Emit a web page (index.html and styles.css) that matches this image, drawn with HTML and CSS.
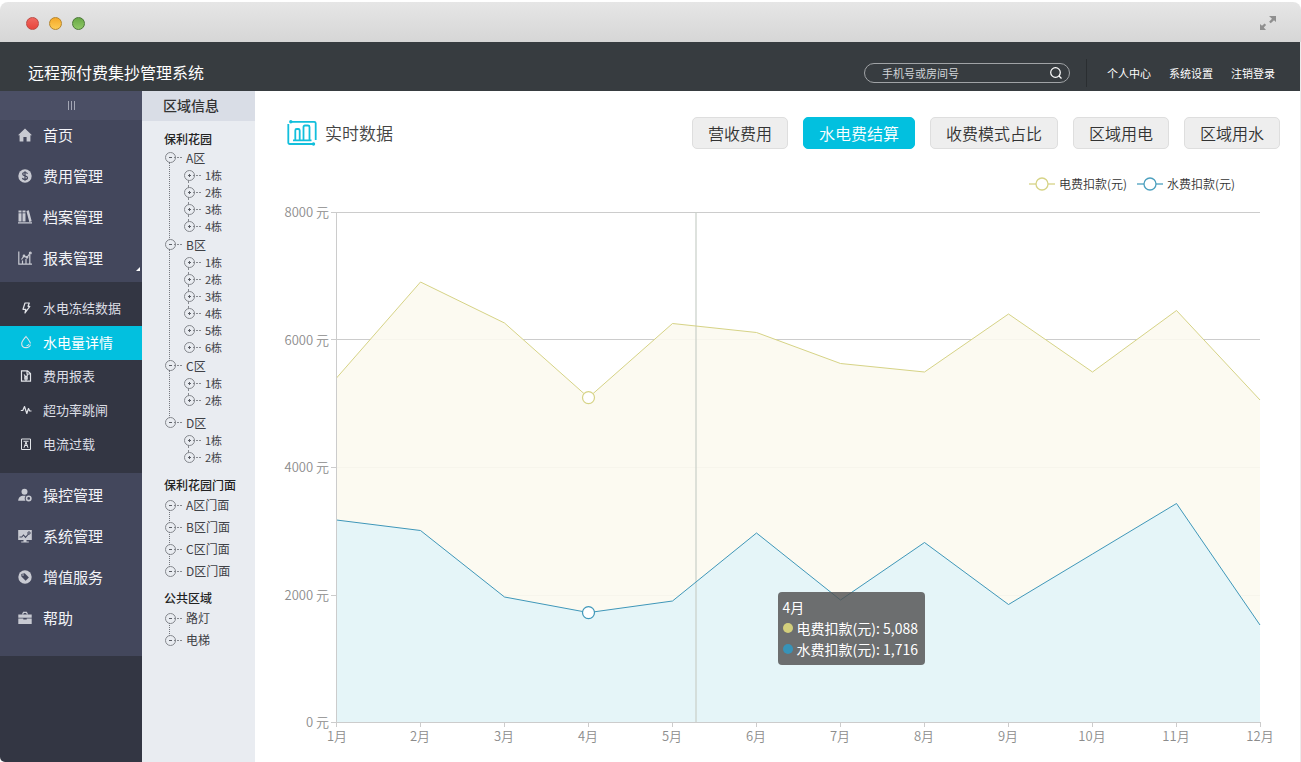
FILE: index.html
```html
<!DOCTYPE html>
<html lang="zh-CN">
<head>
<meta charset="utf-8">
<title>远程预付费集抄管理系统</title>
<meta name="viewport" content="width=device-width, initial-scale=1">
<link rel="stylesheet" href="styles.css">
</head>
<body>
<div class="window">
  <div class="titlebar">
    <div class="lights"><span class="light light-red"></span><span class="light light-yellow"></span><span class="light light-green"></span></div>
    <svg class="expand" viewBox="0 0 18 16" width="18" height="16" fill="#8f8f8f"><path d="M10 1h7v6l-2-1.800-3.300 3-1.600-1.500L13 3.800z"/><path d="M1 15V9l2 1.800 2.600-2.400 1.500 1.500L4.800 12.500 7 15z"/></svg>
  </div>

  <header class="header">
    <h1 class="brand">远程预付费集抄管理系统</h1>
    <form class="search">
      <input class="search-input" type="search" aria-label="搜索" placeholder="手机号或房间号">
      <button class="search-btn" type="button" aria-label="搜索"><svg viewBox="0 0 14 14" width="14" height="14" fill="none" stroke="#fff" stroke-width="1.200"><circle cx="6.500" cy="6.500" r="4.800"/><path d="M10 10l2.500 2.500"/></svg></button>
    </form>
    <nav class="topnav"><a href="#">个人中心</a><a href="#">系统设置</a><a href="#">注销登录</a></nav>
  </header>

  <div class="body">
    <aside class="sidebar">
      <button class="collapse" type="button" aria-label="收起菜单"><span></span><span></span><span></span></button>
      <nav class="menu menu-top">
        <a href="#"><svg class="icon" viewBox="0 0 14 14"><path fill="currentColor" d="M7 .5L14 7.200h-1.600V13.500H8.600V9H5.400v4.500H1.600V7.200H0z"/></svg>首页</a>
        <a href="#"><svg class="icon" viewBox="0 0 14 14"><circle cx="7" cy="7" r="6.700" fill="currentColor"/><path d="M9.500 4.800C9.100 3.800 8.200 3.500 7 3.500c-1.400 0-2.300.6-2.300 1.600C4.700 7.400 9.500 6.300 9.500 8.800c0 1.100-1 1.700-2.500 1.700-1.300 0-2.300-.4-2.600-1.500M7 2.200v9.600" fill="none" stroke="#43475c" stroke-width="1.200"/></svg>费用管理</a>
        <a href="#"><svg class="icon" viewBox="0 0 14 14" fill="currentColor"><path d="M.5.500h3v2h-3zM4.500.500h3v2h-3zM.5 3.300h3v8.200h-3zM4.500 3.300h3v8.200h-3zM8.400.900l2.400-.6 2.900 11-2.400.6zM0 12.300h14v1.200H0z"/></svg>档案管理</a>
        <a href="#" class="has-sub"><svg class="icon" viewBox="0 0 14 14" fill="none" stroke="currentColor" stroke-width="1.200"><path d="M.8.500v12.700H14M4.500 13V9.500M8 13V8M11.800 13V4M3.500 8.500L6 5l2.800 1.500L12.300 2"/><circle cx="6" cy="5" r=".8"/><circle cx="9" cy="6.300" r=".8"/><circle cx="12.300" cy="2" r=".9"/></svg>报表管理</a>
      </nav>
      <nav class="submenu">
        <a href="#"><svg class="icon" viewBox="0 0 14 14" fill="none" stroke="currentColor" stroke-width="1.200" stroke-linejoin="round"><path d="M6 2h4.300L9 5.300h1.800L6 12 6.800 8.300H4z"/></svg>水电冻结数据</a>
        <a href="#" class="active"><svg class="icon" viewBox="0 0 14 14" fill="none" stroke="currentColor" stroke-width="1.100"><path d="M11.400 8.500C11.100 6.300 9 4 7 1.500 5 4 2.700 6.300 2.700 8.700c0 2.300 1.900 3.900 4.300 3.900 2.100 0 3.900-1.300 4.400-3M7.500 10.800c1.200-.1 2-.8 2.400-1.700"/></svg>水电量详情</a>
        <a href="#"><svg class="icon" viewBox="0 0 14 14" fill="none" stroke="currentColor" stroke-width="1.200"><path d="M2.500 1.800h6L11.500 4.500v7.700h-9zM8 2v3h3M5 5.500l2 2.500 2-2.500M7 8v3.500M5 8.200h4M5 9.800h4"/></svg>费用报表</a>
        <a href="#"><svg class="icon" viewBox="0 0 14 14" fill="none" stroke="currentColor" stroke-width="1.200" stroke-linejoin="round"><path d="M1.800 7.500h2L5.500 3.500l2.300 7 1.700-5 1.200 2.500h1.800"/></svg>超功率跳闸</a>
        <a href="#"><svg class="icon" viewBox="0 0 14 14" fill="none" stroke="currentColor" stroke-width="1"><path d="M2.500 2h9v10.500h-9zM4.500 4.300h5M5 10.800L7 5l2 5.800M5.800 8.500h2.400"/></svg>电流过载</a>
      </nav>
      <nav class="menu menu-bottom">
        <a href="#"><svg class="icon" viewBox="0 0 14 14"><circle cx="6.500" cy="3.700" r="3" fill="currentColor"/><path fill="currentColor" d="M.2 12.800C.2 9.500 2.500 7.700 5.500 7.700h2.200c-1.300 1.400-1.300 3.500-.2 5.100z"/><circle cx="10.700" cy="10.400" r="2.200" fill="none" stroke="currentColor" stroke-width="1.600"/></svg>操控管理</a>
        <a href="#"><svg class="icon" viewBox="0 0 14 14"><path fill="currentColor" d="M.2 1h13.600v10H8.500v1.500h2.300v1H3.200v-1h2.300V11H.2z"/><path d="M1.500 8h2.300l1.700-2 2 2.300 3-3.300" fill="none" stroke="#43475c" stroke-width="1.100"/><circle cx="11" cy="4" r="1.200" fill="none" stroke="#43475c"/></svg>系统管理</a>
        <a href="#"><svg class="icon" viewBox="0 0 14 14"><circle cx="7" cy="7" r="6.700" fill="currentColor"/><path d="M3.300 4l3.400-.8 4.200 4.300-3.300 3.200-4.200-4.200z" fill="#43475c"/><circle cx="5" cy="5" r=".8" fill="#c8cad2"/></svg>增值服务</a>
        <a href="#"><svg class="icon" viewBox="0 0 14 14"><path fill="currentColor" d="M.3 3.500h13.400v3.300H.3zM.3 7.500h5v1h3.400v-1h5v5.500H.3z"/><path d="M4.500 3.500L5.500 1.400h3l1 2.100" fill="none" stroke="currentColor" stroke-width="1.200"/></svg>帮助</a>
      </nav>
    </aside>

    <aside class="regions">
      <h2 class="regions-title">区域信息</h2>
      <h3 class="group-title">保利花园</h3>
      <ul class="tree">
        <li class="node"><a href="#">A区</a>
          <ul class="leaves"><li><a href="#">1栋</a></li><li><a href="#">2栋</a></li><li><a href="#">3栋</a></li><li><a href="#">4栋</a></li></ul></li>
        <li class="node"><a href="#">B区</a>
          <ul class="leaves"><li><a href="#">1栋</a></li><li><a href="#">2栋</a></li><li><a href="#">3栋</a></li><li><a href="#">4栋</a></li><li><a href="#">5栋</a></li><li><a href="#">6栋</a></li></ul></li>
        <li class="node node-spaced"><a href="#">C区</a>
          <ul class="leaves"><li><a href="#">1栋</a></li><li><a href="#">2栋</a></li></ul></li>
        <li class="node"><a href="#">D区</a>
          <ul class="leaves"><li><a href="#">1栋</a></li><li><a href="#">2栋</a></li></ul></li>
      </ul>
      <h3 class="group-title">保利花园门面</h3>
      <ul class="tree tree-loose">
        <li class="node"><a href="#">A区门面</a></li><li class="node"><a href="#">B区门面</a></li><li class="node"><a href="#">C区门面</a></li><li class="node"><a href="#">D区门面</a></li>
      </ul>
      <h3 class="group-title group-near">公共区域</h3>
      <ul class="tree tree-loose">
        <li class="node"><a href="#">路灯</a></li><li class="node"><a href="#">电梯</a></li>
      </ul>
    </aside>

    <main class="main">
      <div class="toolbar">
        <svg viewBox="0 0 30 26" width="30" height="26" fill="none" stroke="#12bfdc" stroke-width="1.800"><path d="M3.500 1.800h23.700q1.500 0 1.500 1.500V20M26.500 24H2.800q-1.500 0-1.500-1.500V4M6 20.300h18.500M8.300 20V10.500q0-1.500 1.500-1.500h1.400q1.500 0 1.500 1.500V20M16.500 20V7q0-1.500 1.500-1.500h3q1.500 0 1.500 1.500v13"/><circle cx="3.800" cy="1.800" r=".8"/><circle cx="26.500" cy="24" r=".8"/></svg>
        <h2 class="page-title">实时数据</h2>
        <div class="tabs">
          <button type="button">营收费用</button><button type="button" class="active">水电费结算</button><button type="button">收费模式占比</button><button type="button">区域用电</button><button type="button">区域用水</button>
        </div>
      </div>
      <div class="legend">
        <span class="legend-item"><svg viewBox="0 0 26 14" width="26" height="14" fill="#fff" stroke="#d6d386" stroke-width="1.300"><path d="M0 7h26"/><circle cx="13" cy="7" r="6"/></svg>电费扣款(元)</span>
        <span class="legend-item"><svg viewBox="0 0 26 14" width="26" height="14" fill="#fff" stroke="#4b9fbe" stroke-width="1.300"><path d="M0 7h26"/><circle cx="13" cy="7" r="6"/></svg>水费扣款(元)</span>
      </div>
      <div class="chart">
        <svg class="plot" viewBox="255 194 1045 568" role="img" aria-label="水电费结算">
          <path class="grid" d="M331 212.500H1260M331 339.500H1260M331 467.500H1260M331 595.500H1260"/>
          <path class="fill-power" d="M336.500 378L420.500 282 504.500 323 588.500 397.600 672.500 323.500 756.500 332.500 840.500 363.500 924.500 372 1008.500 314 1092.500 372 1176.500 310.500 1260 400V722H336.500z"/>
          <path class="fill-water" d="M336.500 520L420.500 530.500 504.500 597 588.500 612.600 672.500 601 756.500 533 840.500 600 924.500 542.500 1008.500 604.500 1092.500 554 1176.500 503.500 1260 625V722H336.500z"/>
          <path class="pointer" d="M696 212V722"/>
          <path class="line-power" d="M336.500 378L420.500 282 504.500 323 588.500 397.600 672.500 323.500 756.500 332.500 840.500 363.500 924.500 372 1008.500 314 1092.500 372 1176.500 310.500 1260 400"/>
          <path class="line-water" d="M336.500 520L420.500 530.500 504.500 597 588.500 612.600 672.500 601 756.500 533 840.500 600 924.500 542.500 1008.500 604.500 1092.500 554 1176.500 503.500 1260 625"/>
          <path class="axis" d="M336.500 212V722M331 722.500H1260.500M336.500 722v5M420.500 722v5M504.500 722v5M588.500 722v5M672.500 722v5M756.500 722v5M840.500 722v5M924.500 722v5M1008.500 722v5M1092.500 722v5M1176.500 722v5M1260.500 722v5"/>
          <circle class="line-power dot" cx="588.500" cy="397.600" r="6"/>
          <circle class="line-water dot" cx="588.500" cy="612.600" r="6"/>
          <g class="label label-y"><text x="329" y="217">8000 元</text><text x="329" y="345">6000 元</text><text x="329" y="472">4000 元</text><text x="329" y="600">2000 元</text><text x="329" y="727">0 元</text></g>
          <g class="label label-x"><text x="337" y="741">1月</text><text x="420" y="741">2月</text><text x="504" y="741">3月</text><text x="588" y="741">4月</text><text x="672" y="741">5月</text><text x="756" y="741">6月</text><text x="840" y="741">7月</text><text x="924" y="741">8月</text><text x="1008" y="741">9月</text><text x="1092" y="741">10月</text><text x="1176" y="741">11月</text><text x="1260" y="741">12月</text></g>
        </svg>
        <div class="tooltip">
          <div>4月</div>
          <div class="tip-row"><i class="tip-dot tip-power"></i>电费扣款(元): 5,088</div>
          <div class="tip-row"><i class="tip-dot tip-water"></i>水费扣款(元): 1,716</div>
        </div>
      </div>
    </main>
  </div>
</div>
</body>
</html>
```
FILE: styles.css
```css
* { box-sizing: border-box; }
body, h1, h2, h3, ul { margin: 0; padding: 0; }
ul { list-style: none; }
a { color: inherit; text-decoration: none; }
button, input { font: inherit; color: inherit; border: 0; padding: 0; background: none; }
svg { flex: none; }

body {
  background: #fff;
  color: #444;
  font-family: "Noto Sans CJK SC", sans-serif;
  font-size: 12px;
}

.window { display: flex; flex-direction: column; min-height: 100vh; padding-top: 2px; }

/* window chrome */
.titlebar {
  display: flex;
  align-items: center;
  justify-content: space-between;
  height: 40px;
  padding: 2px 24px 0 26px;
  border-radius: 8px 8px 0 0;
  background: linear-gradient(#e6e6e6, #d6d6d6);
}
.lights { display: flex; gap: 10px; }
.light { width: 13px; height: 13px; border: 1px solid; border-radius: 50%; }
.light-red { background: linear-gradient(#f0675f, #e8453c); border-color: #bd4a44; }
.light-yellow { background: linear-gradient(#f5a929, #fccb55); border-color: #b5852c; }
.light-green { background: linear-gradient(#68a846, #8fc866); border-color: #4b7838; }

/* application header */
.header {
  display: flex;
  align-items: center;
  height: 49px;
  padding: 13px 25px 0 28px;
  border-right: 1px solid #ececec;
  background: #373c40;
  color: #fff;
}
.brand { font-size: 16px; font-weight: 400; line-height: 22px; margin-right: auto; padding-bottom: 3px; }
.search {
  display: flex;
  align-items: center;
  width: 206px;
  height: 20px;
  padding: 0 6px 0 17px;
  border: 1px solid #a0a3a6;
  border-radius: 10px;
}
.search-input { flex: 1; min-width: 0; font-size: 11px; line-height: 16px; outline: 0; appearance: none; }
.search-input::placeholder { color: #d2d5d8; opacity: 1; }
.search-btn { display: flex; }
.topnav {
  display: flex;
  gap: 18px;
  margin-left: 16px;
  padding-left: 20px;
  border-left: 1px solid #2a2e31;
  font-size: 11px;
  line-height: 28px;
}

.body { display: flex; flex: 1; }

/* main navigation */
.sidebar { flex: none; width: 142px; background: #333643; color: #f3f4f8; border-bottom-left-radius: 5px; }
.collapse { display: flex; align-items: center; justify-content: center; gap: 2px; width: 100%; height: 29px; background: #4b4f65; }
.collapse span { width: 1px; height: 9px; background: #a4a7b5; }
.menu { display: flex; flex-direction: column; gap: 20px; background: #43475c; }
.menu-top { padding: 4px 0 14px; }
.menu-bottom { padding: 11px 0 28px; }
.menu a, .submenu a { display: flex; align-items: center; gap: 11px; padding-left: 18px; }
.menu a { font-size: 15px; line-height: 21px; }
.icon { width: 14px; height: 14px; color: #c8cad2; }
.has-sub { position: relative; }
.has-sub::after {
  content: "";
  position: absolute;
  right: 2px;
  bottom: -3px;
  border-left: 4px solid transparent;
  border-bottom: 4px solid #fff;
}
.submenu { padding: 10px 0 11px; }
.submenu a { font-size: 13px; line-height: 32px; padding-bottom: 2px; color: #dcdee5; padding-left: 19px; gap: 10px; }
.submenu .icon { color: #e2e4e9; }
.submenu a.active { background: #02c0df; color: #fff; font-size: 14px; }

/* region tree */
.regions { flex: none; width: 113px; background: #e9ecf1; color: #3f4146; }
.regions-title { padding: 0 0 2px 21px; background: #d9dde6; color: #333; font-size: 14px; font-weight: 500; line-height: 28px; }
.group-title { padding: 8px 0 0 22px; color: #222; font-size: 12px; font-weight: 500; line-height: 19px; }
.tree { padding-left: 23px; }
.tree + .group-title { padding-top: 9px; }
.tree + .group-near { padding-top: 6px; }
.node, .leaves li { position: relative; }
.node > a, .leaves a {
  display: flex;
  align-items: center;
  background: repeating-linear-gradient(90deg, #85888e 0 2px, transparent 2px 3px) 9px 50% / 9px 1px no-repeat;
}
.node > a { line-height: 19px; }
.leaves { padding-left: 19px; }
.leaves a { font-size: 11px; line-height: 17px; }
.node-spaced { padding-bottom: 4px; }
.tree-loose .node > a { line-height: 22px; }

.node > a::before, .leaves a::before {
  content: "";
  width: 9px;
  height: 9px;
  margin-right: 10px;
  border: 1px solid #85888e;
  border-radius: 50%;
  background: linear-gradient(#5c5f66, #5c5f66) center / 3px 1px no-repeat;
}
.leaves a::before {
  background:
    linear-gradient(#5c5f66, #5c5f66) center / 3px 1px no-repeat,
    linear-gradient(#5c5f66, #5c5f66) center / 1px 3px no-repeat;
}

.node:not(:last-child)::before {
  content: "";
  position: absolute;
  left: 4px;
  top: 14px;
  bottom: -5px;
  border-left: 1px dotted #74777e;
}
.leaves li:not(:last-child):not(:nth-child(n + 4))::before {
  content: "";
  position: absolute;
  left: 4px;
  top: 13px;
  height: 8px;
  border-left: 1px dashed #85888e;
}
.tree-loose .node:not(:last-child)::before { top: 16px; bottom: -7px; }

/* content */
.main { flex: 1; min-width: 0; border-right: 1px solid #ececec; }
.toolbar { display: flex; align-items: center; padding: 26px 20px 0 32px; }
.page-title { margin-left: 8px; color: #444; font-size: 17px; font-weight: 350; line-height: 24px; }
.tabs { display: flex; gap: 15px; margin-left: auto; }
.tabs button {
  height: 32px;
  padding: 0 15px 1px;
  border: 1px solid #dedede;
  border-radius: 5px;
  background: #eee;
  color: #333;
  font-size: 16px;
  font-weight: 350;
  white-space: nowrap;
}
.tabs button.active { border-color: #02c0df; background: #02c0df; color: #fff; }
.legend { display: flex; justify-content: flex-end; gap: 10px; padding: 25px 65px 0 0; color: #333; font-weight: 350; line-height: 20px; }
.legend-item { display: flex; align-items: center; gap: 4px; }

.chart { position: relative; }
.plot { display: block; width: 100%; }
.grid, .axis { fill: none; stroke: #ccc; }
.fill-power { fill: #fcf9ef; fill-opacity: .9; }
.fill-water { fill: #e4f4f8; fill-opacity: .95; }
.line-power { fill: none; stroke: #d6d386; }
.line-water { fill: none; stroke: #3f97b9; }
.dot { fill: #fff; stroke-width: 1.2; }
.pointer { stroke: #c8cec8; stroke-opacity: .6; stroke-width: 2; }
.label { fill: #8c8c8c; font-size: 13px; font-weight: 350; }
.label-y { text-anchor: end; }
.label-x { text-anchor: middle; }
.tooltip {
  position: absolute;
  left: 50%;
  top: 70%;
  padding: 5px 7px 5px 5px;
  border-radius: 4px;
  background: rgba(80, 80, 80, .82);
  color: #fff;
  font-size: 14px;
  line-height: 21px;
  white-space: nowrap;
}
.tip-row { display: flex; align-items: center; gap: 4px; }
.tip-dot { width: 10px; height: 10px; border-radius: 50%; }
.tip-power { background: #d3cf7c; }
.tip-water { background: #3793b8; }
```
